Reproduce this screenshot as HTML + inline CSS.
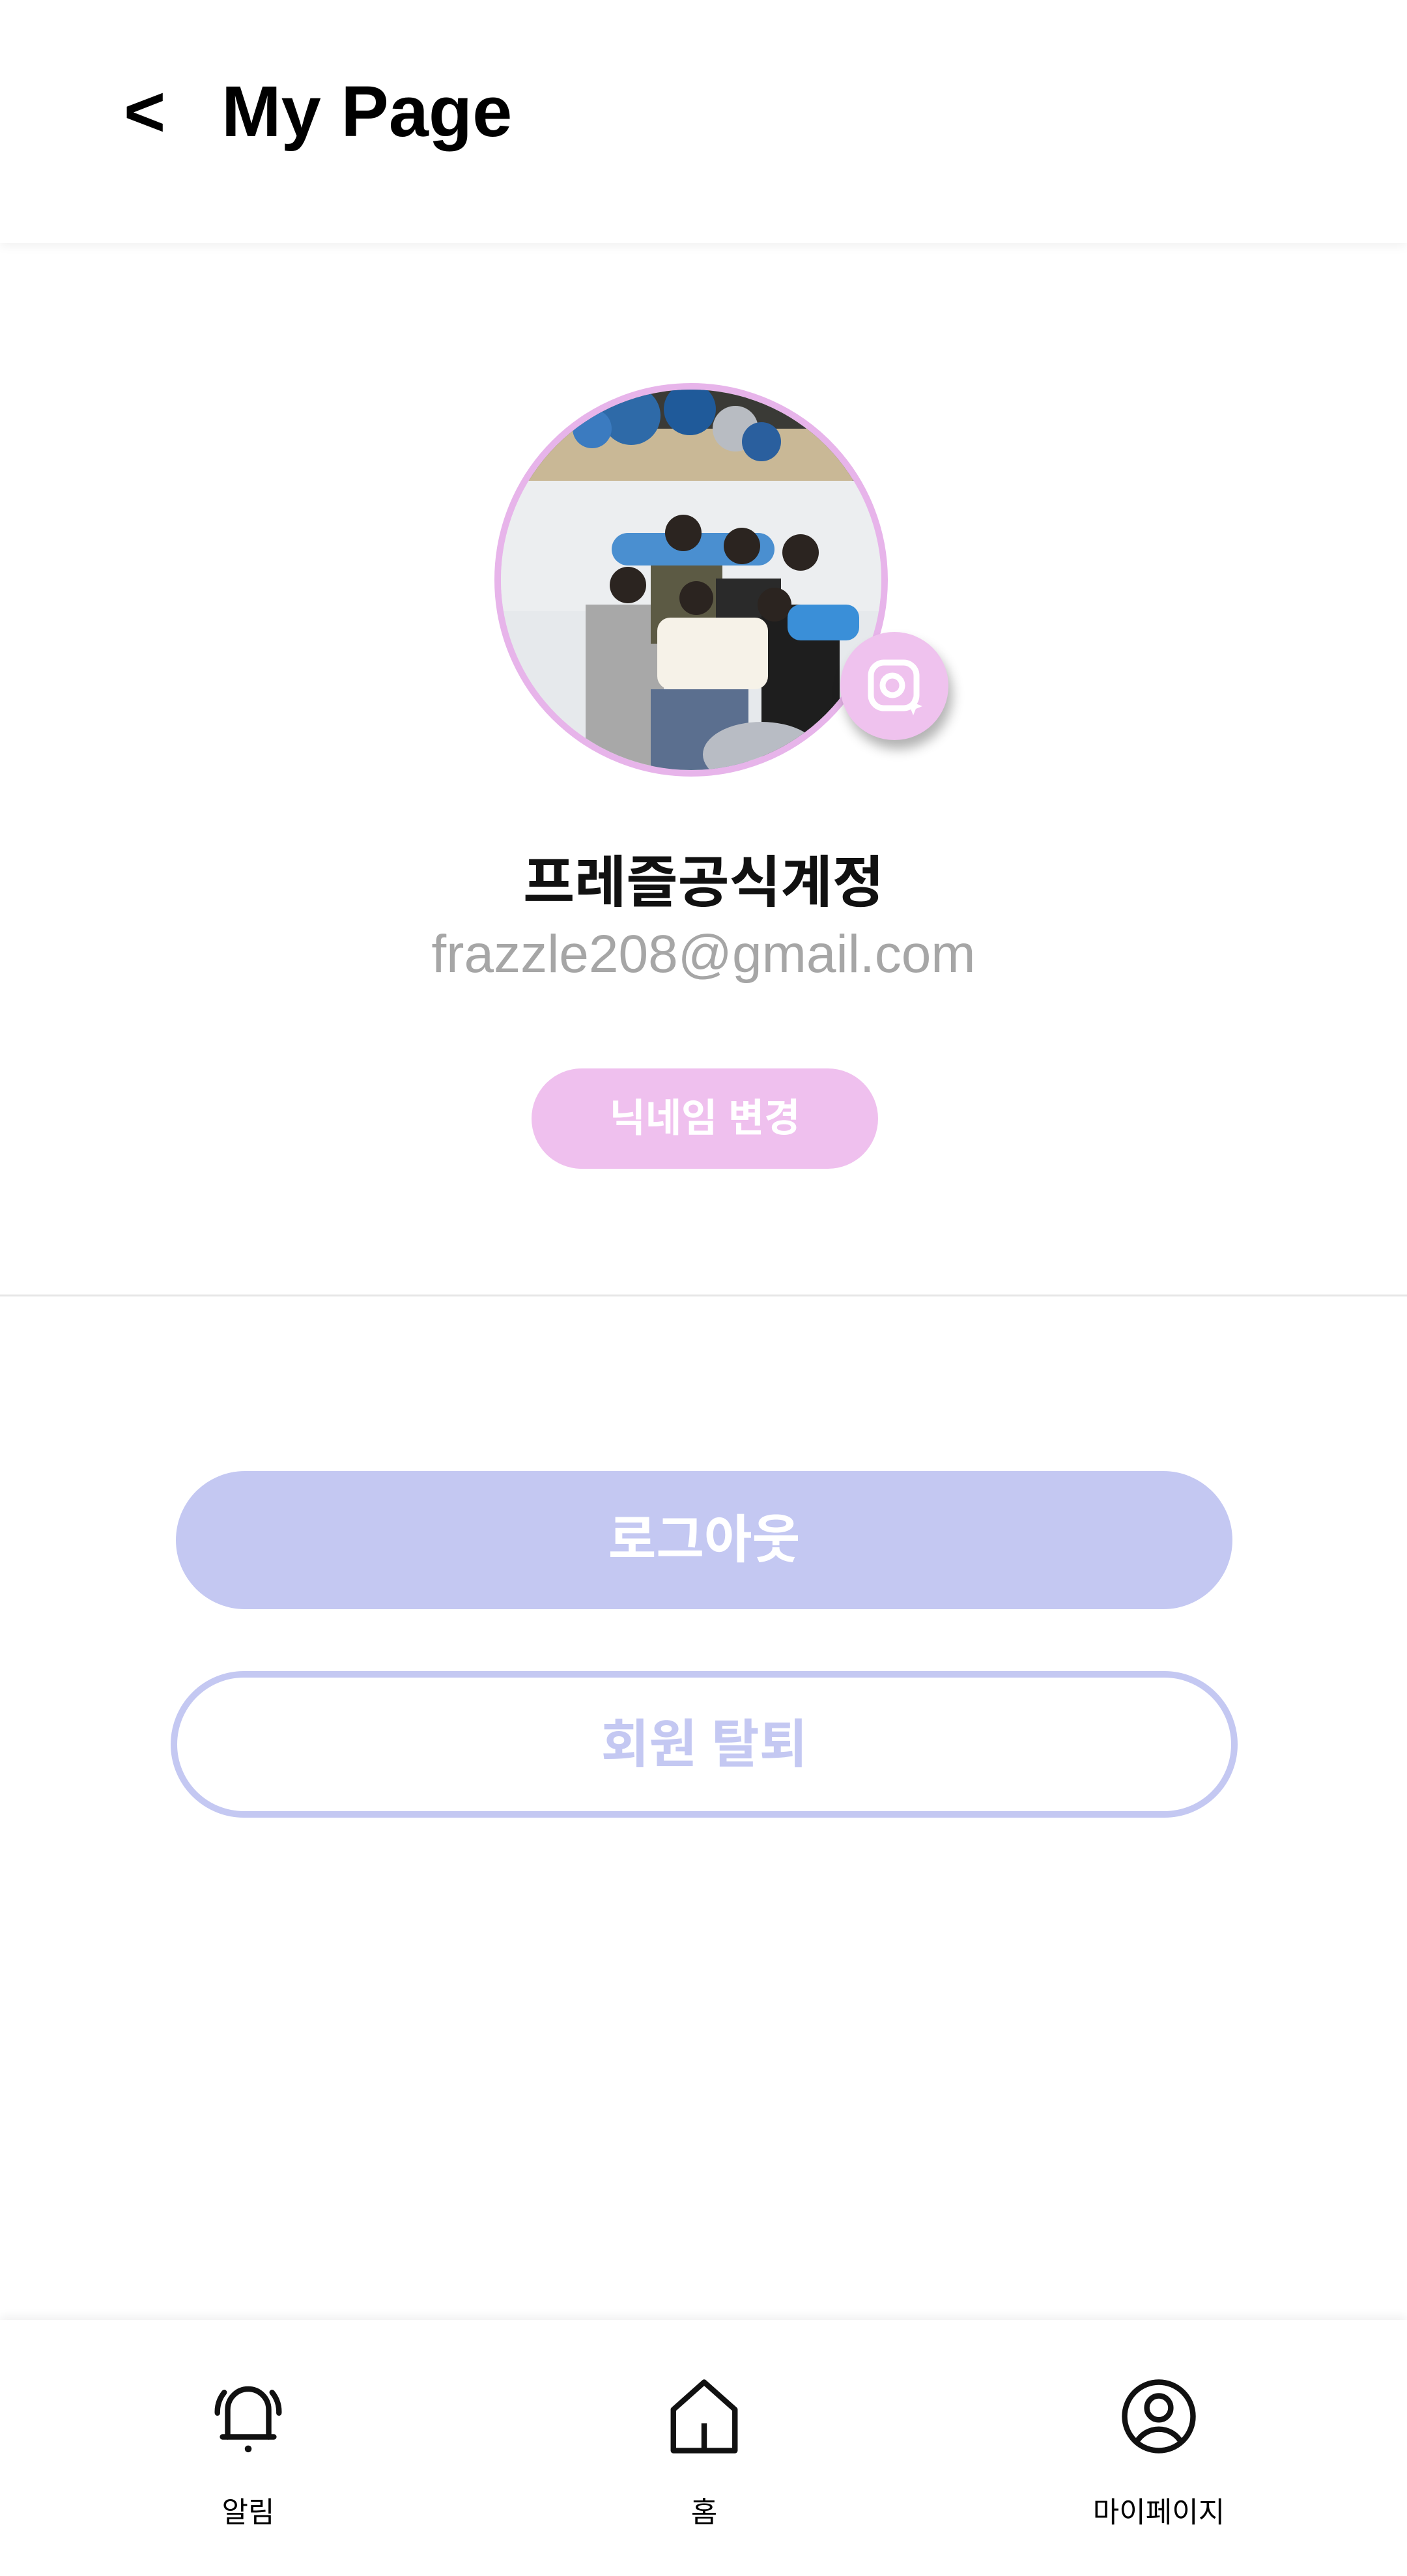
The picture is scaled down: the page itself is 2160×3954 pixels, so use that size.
<!DOCTYPE html>
<html><head><meta charset="utf-8"><style>
*{margin:0;padding:0;box-sizing:border-box}
body{width:2160px;height:3954px;background:#fff;position:relative;overflow:hidden;font-family:"Liberation Sans","Noto Sans CJK KR",sans-serif}
.hdr{position:absolute;left:0;top:0;width:2160px;height:373px;background:#fff;box-shadow:0 6px 14px rgba(0,0,0,0.05)}
.hdr .b{position:absolute;left:190px;top:108px;font-size:110px;font-weight:bold}
.hdr .t{position:absolute;left:340px;top:108px;font-size:110px;font-weight:bold;color:#000}
.av{position:absolute;left:759px;top:588px;width:604px;height:604px;border-radius:50%;border:10px solid #e7b4ea;overflow:hidden;background:#e6e9ec}
.cam{position:absolute;left:1290px;top:970px;width:166px;height:166px;border-radius:50%;background:#efc2ee;box-shadow:6px 14px 18px rgba(0,0,0,0.3)}
.c{position:absolute;left:0;width:2160px;text-align:center}
.nick{position:absolute;left:816px;top:1640px;width:532px;height:154px;border-radius:77px;background:#efc0ee;color:#fff;font-size:60px;font-weight:bold;text-align:center;line-height:154px}
.hr{position:absolute;left:0;top:1987px;width:2160px;height:3px;background:#e6e6e6}
.lo{position:absolute;left:270px;top:2258px;width:1622px;height:212px;border-radius:106px;background:#c4c8f2;color:#fff;font-size:80px;font-weight:bold;text-align:center;line-height:212px}
.wd{position:absolute;left:262px;top:2565px;width:1638px;height:225px;border-radius:113px;border:10px solid #c4c8f2;color:#c4c8f2;font-size:80px;font-weight:bold;text-align:center;line-height:205px}
.nav{position:absolute;left:0;top:3561px;width:2160px;height:393px;background:#fff;box-shadow:0 -6px 14px rgba(0,0,0,0.06)}
.lbl{position:absolute;top:3820px;font-size:44px;color:#000;text-align:center;width:400px}
</style></head><body>
<div class="hdr"><div class="b">&lt;</div><div class="t">My Page</div></div>
<div class="av"><svg width="584" height="584" viewBox="0 0 584 584">
<rect width="584" height="140" fill="#3a3a36"/>
<rect x="40" y="60" width="500" height="80" fill="#c9b896"/>
<circle cx="200" cy="40" r="45" fill="#2e6aa8"/><circle cx="290" cy="30" r="40" fill="#1f5a9a"/><circle cx="360" cy="60" r="35" fill="#b8bcc2"/><circle cx="400" cy="80" r="30" fill="#2a5f9e"/><circle cx="140" cy="60" r="30" fill="#3b7bc0"/>
<rect y="140" width="584" height="200" fill="#eceef0"/>
<rect x="170" y="220" width="250" height="50" rx="25" fill="#4a8fd0"/>
<rect x="130" y="330" width="120" height="254" fill="#a8a8a8"/>
<rect x="230" y="270" width="110" height="120" fill="#5c5a44"/>
<rect x="330" y="290" width="100" height="110" fill="#2a2a2a"/>
<rect x="400" y="330" width="120" height="254" fill="#1e1e1e"/>
<rect x="240" y="350" width="170" height="110" rx="20" fill="#f6f2e8"/>
<rect x="230" y="460" width="150" height="124" fill="#5b6f8f"/>
<circle cx="195" cy="300" r="28" fill="#2b2420"/><circle cx="280" cy="220" r="28" fill="#2b2420"/><circle cx="370" cy="240" r="28" fill="#2b2420"/><circle cx="460" cy="250" r="28" fill="#2b2420"/><circle cx="420" cy="330" r="26" fill="#2b2420"/><circle cx="300" cy="320" r="26" fill="#2b2420"/>
<rect x="440" y="330" width="110" height="55" rx="20" fill="#3a8fd8"/>
<ellipse cx="400" cy="560" rx="90" ry="50" fill="#b8bcc4"/>
</svg></div>
<div class="cam"><svg width="166" height="166" viewBox="0 0 166 166"><rect x="47" y="47" width="70" height="70" rx="20" fill="none" stroke="#fff" stroke-width="9"/><circle cx="80" cy="82" r="15" fill="none" stroke="#fff" stroke-width="9"/><path d="M112 100 l4 10 10 4 -10 4 -4 10 -4 -10 -10 -4 10 -4z" fill="#fff"/></svg></div>
<div class="c" style="top:1284px;font-size:86px;font-weight:bold;color:#111">프레즐공식계정</div>
<div class="c" style="top:1418px;font-size:82px;color:#a6a6a6">frazzle208@gmail.com</div>
<div class="nick">닉네임 변경</div>
<div class="hr"></div>
<div class="lo">로그아웃</div>
<div class="wd">회원 탈퇴</div>
<div class="nav"></div>
<svg style="position:absolute;left:318px;top:3646px" width="126" height="126" viewBox="0 0 24 24" fill="none" stroke="#111" stroke-width="1.6" stroke-linecap="round"><path d="M6 18V10a6 6 0 0 1 12 0v8"/><path d="M4.5 18h15"/><path d="M12 21.5h.01" stroke-width="2"/><path d="M3 11a9 9 0 0 1 2-6M21 11a9 9 0 0 0-2-6"/></svg>
<svg style="position:absolute;left:1018px;top:3646px" width="126" height="126" viewBox="0 0 24 24" fill="none" stroke="#111" stroke-width="1.6" stroke-linejoin="round"><path d="M3 22V10L12 2l9 8v12z"/><path d="M12 14v8"/></svg>
<svg style="position:absolute;left:1716px;top:3646px" width="126" height="126" viewBox="0 0 24 24" fill="none" stroke="#111" stroke-width="1.6"><circle cx="12" cy="12" r="10"/><circle cx="12" cy="9.5" r="3.5"/><path d="M5.5 19.5a7.5 7.5 0 0 1 13 0"/></svg>
<div class="lbl" style="left:181px">알림</div>
<div class="lbl" style="left:881px">홈</div>
<div class="lbl" style="left:1579px">마이페이지</div>
</body></html>
